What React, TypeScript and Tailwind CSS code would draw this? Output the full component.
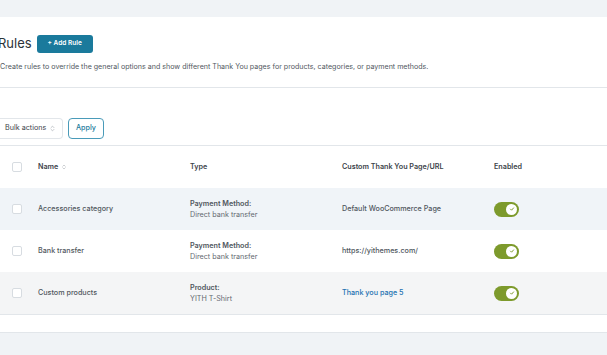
import { ChevronsUpDown } from 'lucide-react';

interface Rule {
  name: string;
  typeLabel: string;
  typeValue: string;
  page: string;
  isLink?: boolean;
  rowClass: string;
}

const rules: Rule[] = [
  {
    name: 'Accessories category',
    typeLabel: 'Payment Method:',
    typeValue: 'Direct bank transfer',
    page: 'Default WooCommerce Page',
    rowClass: 'bg-[#f0f4f8]',
  },
  {
    name: 'Bank transfer',
    typeLabel: 'Payment Method:',
    typeValue: 'Direct bank transfer',
    page: 'https://yithemes.com/',
    rowClass: 'bg-white',
  },
  {
    name: 'Custom products',
    typeLabel: 'Product:',
    typeValue: 'YITH T-Shirt',
    page: 'Thank you page 5',
    isLink: true,
    rowClass: 'bg-[#f4f5f6]',
  },
];

function Toggle() {
  return (
    <div className="flex items-center w-[25px] h-[15px] rounded-full bg-[#7d9a2c] pr-[2px] justify-end">
      <div className="w-[11px] h-[11px] rounded-full bg-white flex items-center justify-center">
        <svg width="6" height="6" viewBox="0 0 10 10" fill="none">
          <path d="M2.5 5.2l1.8 1.8L7.6 3.2" stroke="#7d9a2c" strokeWidth={1.6} strokeLinecap="round" strokeLinejoin="round" />
        </svg>
      </div>
    </div>
  );
}

function Checkbox() {
  return <div className="w-[10px] h-[10px] rounded-[2px] border border-[#d7dce1] bg-white" />;
}

export default function App() {
  return (
    <div className="w-[607px] h-[355px] overflow-hidden bg-[#f0f3f6] text-[#3c434a]" style={{ fontFamily: 'Inter, "Noto Sans", sans-serif' }}>
      <div className="h-[17px]" />
      <div className="bg-white border-b border-[#e2e6ea]">
        {/* Header */}
        <div className="pt-[17px] pb-[15px] border-b border-[#e2e6ea]">
          <div className="flex items-center gap-[5px] -ml-[2px]">
            <h1 className="text-[13px] leading-[19px] text-[#2c3338]">Rules</h1>
            <button className="h-[18px] w-[56px] rounded-[3px] bg-[#1a7a9c] text-white text-[6.5px] font-semibold">
              + Add Rule
            </button>
          </div>
          <p className="mt-[9px] text-[7.1px] leading-[10px] text-[#50575e]">
            Create rules to override the general options and show different Thank You pages for products, categories, or payment methods.
          </p>
        </div>

        {/* Bulk actions */}
        <div className="flex items-center gap-[5px] pt-[30px] pb-[6px]">
          <div className="flex items-center gap-[3px] h-[21px] w-[63px] pl-[5px] border border-[#e2e6ea] rounded-r-[4px] border-l-0 text-[7.2px] text-[#3c434a]">
            Bulk actions
            <ChevronsUpDown className="w-[7px] h-[7px] text-[#9aa1a7]" />
          </div>
          <button className="h-[21px] w-[36px] border border-[#4a9bb9] rounded-[4px] text-[7.2px] text-[#1a7a9c] font-medium">
            Apply
          </button>
        </div>

        {/* Table */}
        <div className="border-t border-[#e2e6ea]">
          <div className="flex items-center h-[42px] text-[7.2px] font-semibold text-[#3c434a]">
            <div className="w-[38px] pl-[12px]"><Checkbox /></div>
            <div className="w-[152px] flex items-center gap-[3px]">
              Name
              <ChevronsUpDown className="w-[6px] h-[6px] text-[#9aa1a7]" />
            </div>
            <div className="w-[152px]">Type</div>
            <div className="w-[152px]">Custom Thank You Page/URL</div>
            <div>Enabled</div>
          </div>
          {rules.map((rule) => (
            <div key={rule.name} className={`flex items-center h-[42px] text-[7.2px] ${rule.rowClass}`}>
              <div className="w-[38px] pl-[12px]"><Checkbox /></div>
              <div className="w-[152px] font-medium text-[#50575e]">{rule.name}</div>
              <div className="w-[152px] leading-[11px]">
                <div className="font-semibold text-[#50575e]">{rule.typeLabel}</div>
                <div className="text-[#646970]">{rule.typeValue}</div>
              </div>
              <div className={`w-[152px] font-medium ${rule.isLink ? 'text-[#2271b1]' : 'text-[#50575e]'}`}>
                {rule.page}
              </div>
              <div><Toggle /></div>
            </div>
          ))}
          <div className="h-[18px] bg-white border-t border-[#e2e6ea]" />
        </div>
      </div>
    </div>
  );
}
